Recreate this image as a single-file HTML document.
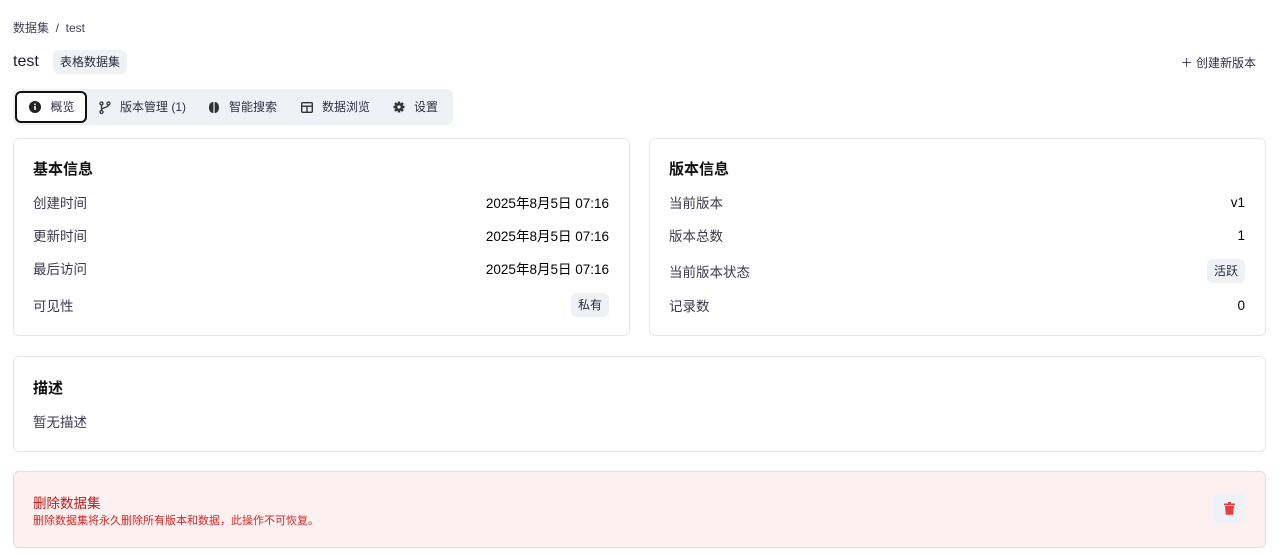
<!DOCTYPE html>
<html><head><meta charset="utf-8"><style>
*{box-sizing:border-box;margin:0;padding:0}
body{width:1280px;height:556px;background:#fff;font-family:"Liberation Sans","Noto Sans CJK SC",sans-serif;color:#1e1e2e;position:relative;overflow:hidden}
.abs{position:absolute}
.bc{left:13px;top:19px;font-size:12px;color:#3f3f50}
.title{left:13px;top:53px;font-size:16px;color:#1e1e2e}
.tag{background:#eef2f7;border-radius:6px;font-size:12px;color:#2a2a3a;padding:0 7px;height:24px;line-height:24px}
.tabs{left:13px;top:89px;width:440px;height:36px;background:#eef2f7;border-radius:6px}
.tab{position:absolute;top:0;height:36px;line-height:36px;font-size:12px;color:#2f3042;display:flex;align-items:center;gap:9px}
.tab.active{top:2px;left:2px;height:32px;width:72px;background:#fff;border:2px solid #111;border-radius:6px;justify-content:center}
.card{border:1px solid #e5e7eb;border-radius:6px;background:#fff}
.h{font-size:15px;font-weight:bold;color:#111}
.row{position:absolute;left:20px;right:20px;font-size:13.5px;color:#3a3a4a;display:flex;justify-content:space-between;align-items:center}
.row b{font-weight:normal;color:#000;font-size:13.5px}
</style></head><body>
<div class="abs bc">数据集 &nbsp;/&nbsp; test</div>
<div class="abs title">test</div>
<div class="abs tag" style="left:53px;top:50px">表格数据集</div>
<div class="abs" style="right:24px;top:54px;font-size:12px;color:#2f3042">＋ 创建新版本</div>
<div class="abs tabs">
 <div class="tab active" style="padding-left:2px"><svg width="12" height="12" viewBox="0 0 12 12"><circle cx="6" cy="6" r="6" fill="#222"/><rect x="5.2" y="5" width="1.6" height="4" fill="#fff"/><circle cx="6" cy="3.3" r="0.9" fill="#fff"/></svg>概览</div>
 <div class="tab" style="left:86px"><svg width="12" height="13" viewBox="0 0 12 13" fill="none" stroke="#333" stroke-width="1.3"><circle cx="2.5" cy="2.5" r="1.5"/><circle cx="2.5" cy="11" r="1.5"/><circle cx="9.5" cy="2.5" r="1.5"/><path d="M2.5 4v5.5M9.5 4c0 3-7 2-7 5"/></svg>版本管理 (1)</div>
 <div class="tab" style="left:195px"><svg width="12" height="13" viewBox="0 0 12 13"><path d="M5.4 1C2 1 1 4 1 6.5S2 12 5.4 12Z M6.6 1C10 1 11 4 11 6.5S10 12 6.6 12Z" fill="#333"/></svg>智能搜索</div>
 <div class="tab" style="left:288px"><svg width="12" height="11" viewBox="0 0 12 11"><rect x="0.7" y="0.7" width="10.6" height="9.6" rx="1" fill="none" stroke="#333" stroke-width="1.4"/><path d="M0.7 4.2h10.6M6 4.2v6" stroke="#333" stroke-width="1.4"/></svg>数据浏览</div>
 <div class="tab" style="left:380px"><svg width="12" height="12" viewBox="0 0 12 12"><circle cx="6" cy="6" r="4" fill="#333"/><g stroke="#333" stroke-width="2.4"><path d="M6 0.5v11M0.5 6h11M2 2l8 8M10 2l-8 8"/></g><circle cx="6" cy="6" r="1.6" fill="#eef2f7"/></svg>设置</div>
</div>
<div class="abs card" style="left:13px;top:138px;width:617px;height:198px">
 <div class="h abs" style="left:19px;top:19px">基本信息</div>
 <div class="row" style="top:53px;left:19px">创建时间<b>2025年8月5日 07:16</b></div>
 <div class="row" style="top:86px;left:19px">更新时间<b>2025年8月5日 07:16</b></div>
 <div class="row" style="top:119px;left:19px">最后访问<b>2025年8月5日 07:16</b></div>
 <div class="row" style="top:154px;left:19px">可见性<span class="tag">私有</span></div>
</div>
<div class="abs card" style="left:649px;top:138px;width:617px;height:198px">
 <div class="h abs" style="left:19px;top:19px">版本信息</div>
 <div class="row" style="top:53px;left:19px">当前版本<b>v1</b></div>
 <div class="row" style="top:86px;left:19px">版本总数<b>1</b></div>
 <div class="row" style="top:120px;left:19px">当前版本状态<span class="tag">活跃</span></div>
 <div class="row" style="top:156px;left:19px">记录数<b>0</b></div>
</div>
<div class="abs card" style="left:13px;top:356px;width:1253px;height:96px">
 <div class="h abs" style="left:19px;top:20px">描述</div>
 <div class="abs" style="left:19px;top:54px;font-size:13.5px;color:#3a3a4a">暂无描述</div>
</div>
<div class="abs" style="left:13px;top:471px;width:1253px;height:77px;background:#fcf0f0;border:1px solid #f6d5d5;border-radius:6px">
 <div class="abs" style="left:19px;top:20px;font-size:13.5px;color:#b91c1c">删除数据集</div>
 <div class="abs" style="left:19px;top:40px;font-size:11px;color:#dc2626">删除数据集将永久删除所有版本和数据，此操作不可恢复。</div>
 <div class="abs" style="left:1199px;top:22px;width:33px;height:29px;background:#eef2f7;border-radius:6px">
  <svg class="abs" style="left:11px;top:8px" width="11" height="13" viewBox="0 0 11 13"><rect x="0" y="1.5" width="11" height="1.6" fill="#e53e3e"/><rect x="4" y="0" width="3" height="1.6" fill="#e53e3e"/><path d="M1 3.8h9l-0.8 9H1.8Z" fill="#e53e3e"/></svg>
 </div>
</div>
</body></html>
